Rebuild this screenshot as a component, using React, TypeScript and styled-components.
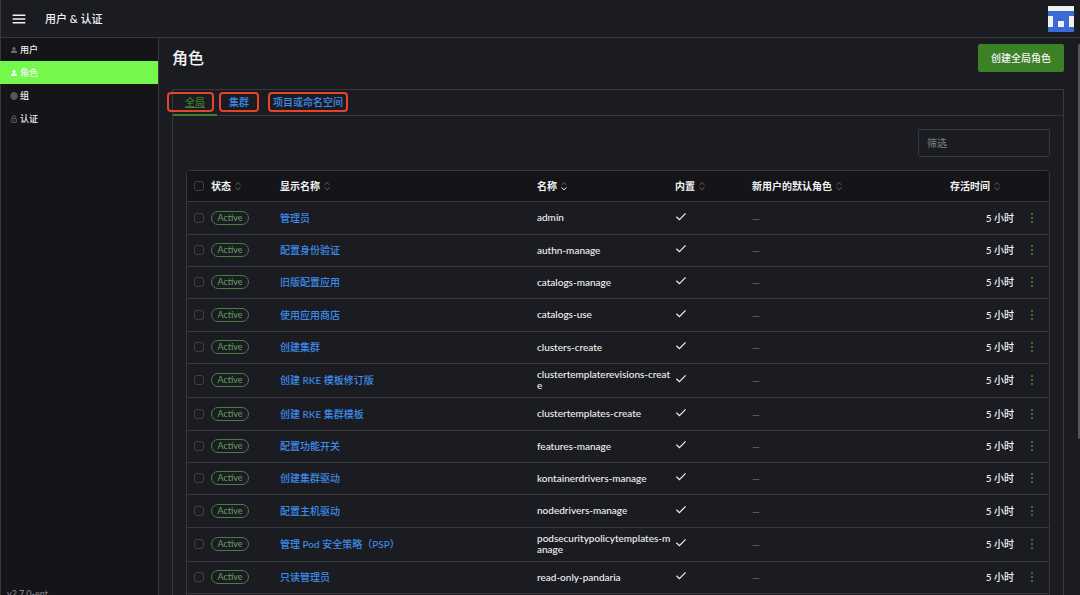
import React from 'react';
import styled, { createGlobalStyle, css } from 'styled-components';

const color = {
  page: '#1b1c21',
  dark: '#141419',
  line: '#37383e',
  text: '#f2f2f4',
  muted: '#6c6d74',
  link: '#3d8bea',
  green: '#3d8126',
  lime: '#75f84c',
  success: '#5d9b5b',
  badgeLine: '#4c7a4b',
  mark: '#e5432a',
};

const GlobalStyle = createGlobalStyle`
  * { box-sizing: border-box; }
  body {
    margin: 0;
    background: ${color.page};
    color: ${color.text};
    font: 500 10px/12px Lato, "Noto Sans CJK SC", sans-serif;
  }
  button, input { font: inherit; color: inherit; }
  a { text-decoration: none; }
`;

const Shell = styled.div`
  height: 100vh;
  display: flex;
  flex-direction: column;
  overflow: hidden;
`;

const TopBar = styled.header`
  flex: none;
  height: 38px;
  display: flex;
  align-items: center;
  padding: 0 6px 0 12px;
  border-bottom: 1px solid ${color.line};
  box-shadow: inset 1px 0 ${color.line};
`;

const MenuButton = styled.button`
  display: flex;
  padding: 0;
  border: 0;
  background: none;
`;

const Product = styled.div`
  flex: 1;
  margin-left: 19px;
  font-size: 11px;
  line-height: 16px;
`;

const Body = styled.div`
  flex: 1;
  min-height: 0;
  display: flex;
`;

const SideNav = styled.nav`
  flex: none;
  width: 159px;
  display: flex;
  flex-direction: column;
  background: ${color.dark};
  border-right: 1px solid ${color.line};
  box-shadow: inset 1px 0 ${color.line};
  overflow: hidden;
`;

const NavItem = styled.a<{ $active?: boolean }>`
  flex: none;
  height: 23px;
  display: flex;
  align-items: center;
  gap: 2px;
  padding-left: 10px;
  font-size: 9px;
  color: ${color.text};
  background: ${p => (p.$active ? color.lime : 'transparent')};
  svg { color: ${p => (p.$active ? '#fff' : color.muted)}; }
`;

const Version = styled.div`
  margin-top: auto;
  margin-bottom: -5px;
  padding-left: 7px;
  font-size: 9px;
  color: #85868c;
`;

const Main = styled.main`
  position: relative;
  flex: 1;
  min-width: 0;
  overflow: hidden;
  padding: 6px 16px 0 13px;
`;

const ScrollThumb = styled.div`
  position: absolute;
  top: 6px;
  right: 0;
  width: 2px;
  height: 71%;
  border-radius: 2px;
  background: #55565a;
`;

const Heading = styled.div`
  display: flex;
  align-items: center;
  justify-content: space-between;
  margin-bottom: 17px;
  h1 {
    margin: 0;
    font-size: 16px;
    line-height: 20px;
    font-weight: 500;
  }
`;

const CreateButton = styled.button`
  height: 28px;
  padding: 0 13px;
  border: 0;
  border-radius: 2px;
  background: ${color.green};
`;

const Panel = styled.section`
  border: 1px solid ${color.line};
`;

const Tabs = styled.div`
  height: 26px;
  display: flex;
  border-bottom: 1px solid ${color.line};
`;

const Tab = styled.a<{ $active?: boolean; $mark: string }>`
  position: relative;
  display: flex;
  align-items: center;
  height: 26px;
  padding: 0 12px;
  color: ${color.link};
  border-bottom: 2px solid transparent;
  ${p => p.$active && css`
    color: ${color.green};
    border-color: ${color.green};
    text-decoration: underline;
  `}
  &::after {
    content: '';
    position: absolute;
    inset-block: 2px;
    inset-inline: ${p => p.$mark};
    border: 2px solid ${color.mark};
    border-radius: 4px;
  }
`;

const TabContent = styled.div`
  padding: 13px;
`;

const Toolbar = styled.div`
  display: flex;
  justify-content: flex-end;
  margin-bottom: 13px;
`;

const Filter = styled.input`
  width: 132px;
  height: 28px;
  padding: 0 8px;
  border: 1px solid ${color.line};
  border-radius: 2px;
  background: ${color.page};
  &::placeholder { color: #75767c; opacity: 1; }
`;

const Frame = styled.div`
  padding-bottom: 32px;
  border: 1px solid ${color.line};
  border-radius: 4px;
  overflow: hidden;
`;

const Table = styled.table`
  width: 100%;
  table-layout: fixed;
  border-collapse: collapse;
  th, td { padding: 0; text-align: left; }
  th { height: 30px; font-weight: 700; background: ${color.dark}; }
  tr { border-bottom: 1px solid ${color.line}; }
`;

const Row = styled.tr`
  height: 32px;
  &:nth-child(3n + 1) { height: 33px; }
`;

const TallRow = styled.tr`
  height: 34px;
`;

const CheckCell = styled.td`
  && { padding-left: 7px; }
`;

const Checkbox = styled.input`
  appearance: none;
  display: block;
  width: 10px;
  height: 10px;
  margin: 0;
  border: 1px solid #404147;
  border-radius: 3px;
`;

const Badge = styled.span`
  display: block;
  width: 38px;
  height: 14px;
  border: 1px solid ${color.badgeLine};
  border-radius: 7px;
  color: ${color.success};
  font-size: 9px;
  line-height: 12px;
  text-align: center;
`;

const RoleLink = styled.a`
  color: ${color.link};
`;

const IdCell = styled.td`
  && { padding-right: 3px; }
  line-height: 11px;
  word-break: break-all;
`;

const Dash = styled.td`
  color: ${color.muted};
`;

const AgeHeader = styled.div`
  padding-right: 14px;
  text-align: right;
`;

const AgeCell = styled.td`
  && { text-align: right; }
`;

const MoreButton = styled.button`
  display: block;
  margin: 0 auto;
  padding: 0;
  border: 0;
  background: none;
  svg { display: block; }
`;

const SortLabel = styled.span`
  display: inline-flex;
  align-items: center;
  gap: 4px;
`;

const SortIcon = ({ active }: { active?: boolean }) => (
  <svg width="6" height="10" viewBox="0 0 6 10" fill="none" strokeWidth="1">
    <path d="M.5 4 3 1.6 5.5 4" stroke="#5f6066" />
    <path d="M.5 6.4 3 8.8 5.5 6.4" stroke={active ? '#f2f2f4' : '#5f6066'} />
  </svg>
);

const UserIcon = () => (
  <svg width="8" height="8" viewBox="0 0 8 8" fill="currentColor">
    <circle cx="4" cy="2.6" r="1.6" />
    <path d="M1 7V6.2C1 5 2.2 4.6 4 4.6S7 5 7 6.2V7Z" />
  </svg>
);

const GlobeIcon = () => (
  <svg width="8" height="8" viewBox="0 0 8 8" fill="none" stroke="currentColor" strokeWidth=".7">
    <circle cx="4" cy="4" r="3.4" fill="currentColor" fillOpacity=".45" />
    <ellipse cx="4" cy="4" rx="1.5" ry="3.4" />
    <path d="M.6 4h6.8M4 .6v6.8" />
  </svg>
);

const LockIcon = () => (
  <svg width="8" height="8" viewBox="0 0 8 8" fill="none" stroke="currentColor" strokeWidth=".8">
    <rect x="1.6" y="3.6" width="4.8" height="3.8" rx=".5" />
    <path d="M2.4 3.6V2.2a1.6 1.6 0 0 1 3.2 0v1.4M4 4.8v1.4" />
  </svg>
);

const MenuIcon = () => (
  <svg width="14" height="10" viewBox="0 0 14 10" stroke="#f2f2f4" strokeWidth="1.5">
    <path d="M.7 1.2h12.6M.7 5h12.6M.7 8.8h12.6" />
  </svg>
);

const CheckIcon = () => (
  <svg width="12" height="10" viewBox="0 0 12 10" fill="none" stroke="#f2f2f4" strokeWidth="1.2">
    <path d="M1.4 4.8 4.4 7.6 10.6 1.4" />
  </svg>
);

const DotsIcon = () => (
  <svg width="4" height="12" viewBox="0 0 4 12" fill="#3f8f26">
    <circle cx="2" cy="2" r="1" />
    <circle cx="2" cy="6" r="1" />
    <circle cx="2" cy="10" r="1" />
  </svg>
);

const Avatar = () => (
  <svg width="26" height="26" viewBox="0 0 26 26" shapeRendering="crispEdges">
    <path fill="#3c6ad4" d="M0 0h26v26H0z" />
    <path fill="#f0f0f0" d="M0 0h26v5H0zM0 10h5v11H0zM21 10h5v11h-5zM10 15h6v6h-6z" />
  </svg>
);

const nav = [
  { label: '用户', Icon: UserIcon },
  { label: '角色', Icon: UserIcon, active: true },
  { label: '组', Icon: GlobeIcon },
  { label: '认证', Icon: LockIcon },
];

const roles = [
  ['管理员', 'admin'],
  ['配置身份验证', 'authn-manage'],
  ['旧版配置应用', 'catalogs-manage'],
  ['使用应用商店', 'catalogs-use'],
  ['创建集群', 'clusters-create'],
  ['创建 RKE 模板修订版', 'clustertemplaterevisions-create'],
  ['创建 RKE 集群模板', 'clustertemplates-create'],
  ['配置功能开关', 'features-manage'],
  ['创建集群驱动', 'kontainerdrivers-manage'],
  ['配置主机驱动', 'nodedrivers-manage'],
  ['管理 Pod 安全策略（PSP）', 'podsecuritypolicytemplates-manage'],
  ['只读管理员', 'read-only-pandaria'],
];

const Sortable = ({ label, active }: { label: string; active?: boolean }) => (
  <SortLabel>{label}<SortIcon active={active} /></SortLabel>
);

export default function App() {
  return (
    <Shell>
      <GlobalStyle />
      <TopBar>
        <MenuButton aria-label="菜单"><MenuIcon /></MenuButton>
        <Product>用户 &amp; 认证</Product>
        <Avatar />
      </TopBar>
      <Body>
        <SideNav>
          {nav.map(({ label, Icon, active }) => (
            <NavItem key={label} href="#" $active={active}><Icon />{label}</NavItem>
          ))}
          <Version>v2.7.0-ent</Version>
        </SideNav>
        <Main>
          <Heading>
            <h1>角色</h1>
            <CreateButton>创建全局角色</CreateButton>
          </Heading>
          <Panel>
            <Tabs>
              <Tab href="#" $active $mark="-6px 3px">全局</Tab>
              <Tab href="#" $mark="2px">集群</Tab>
              <Tab href="#" $mark="7px">项目或命名空间</Tab>
            </Tabs>
            <TabContent>
              <Toolbar><Filter type="search" placeholder="筛选" aria-label="筛选" /></Toolbar>
              <Frame>
                <Table>
                  <colgroup>
                    <col width="24" />
                    <col width="69" />
                    <col />
                    <col width="138" />
                    <col width="77" />
                    <col width="163" />
                    <col width="99" />
                    <col width="35" />
                  </colgroup>
                  <thead>
                    <tr>
                      <CheckCell as="th"><Checkbox type="checkbox" aria-label="全选" /></CheckCell>
                      <th><Sortable label="状态" /></th>
                      <th><Sortable label="显示名称" /></th>
                      <th><Sortable label="名称" active /></th>
                      <th><Sortable label="内置" /></th>
                      <th><Sortable label="新用户的默认角色" /></th>
                      <th><AgeHeader><Sortable label="存活时间" /></AgeHeader></th>
                      <th />
                    </tr>
                  </thead>
                  <tbody>
                    {roles.map(([name, id]) => {
                      const R = id.length > 30 ? TallRow : Row;
                      return (
                        <R key={id}>
                          <CheckCell><Checkbox type="checkbox" aria-label={name} /></CheckCell>
                          <td><Badge>Active</Badge></td>
                          <td><RoleLink href="#">{name}</RoleLink></td>
                          <IdCell>{id}</IdCell>
                          <td><CheckIcon /></td>
                          <Dash>—</Dash>
                          <AgeCell>5 小时</AgeCell>
                          <td><MoreButton aria-label="操作"><DotsIcon /></MoreButton></td>
                        </R>
                      );
                    })}
                  </tbody>
                </Table>
              </Frame>
            </TabContent>
          </Panel>
          <ScrollThumb />
        </Main>
      </Body>
    </Shell>
  );
}
